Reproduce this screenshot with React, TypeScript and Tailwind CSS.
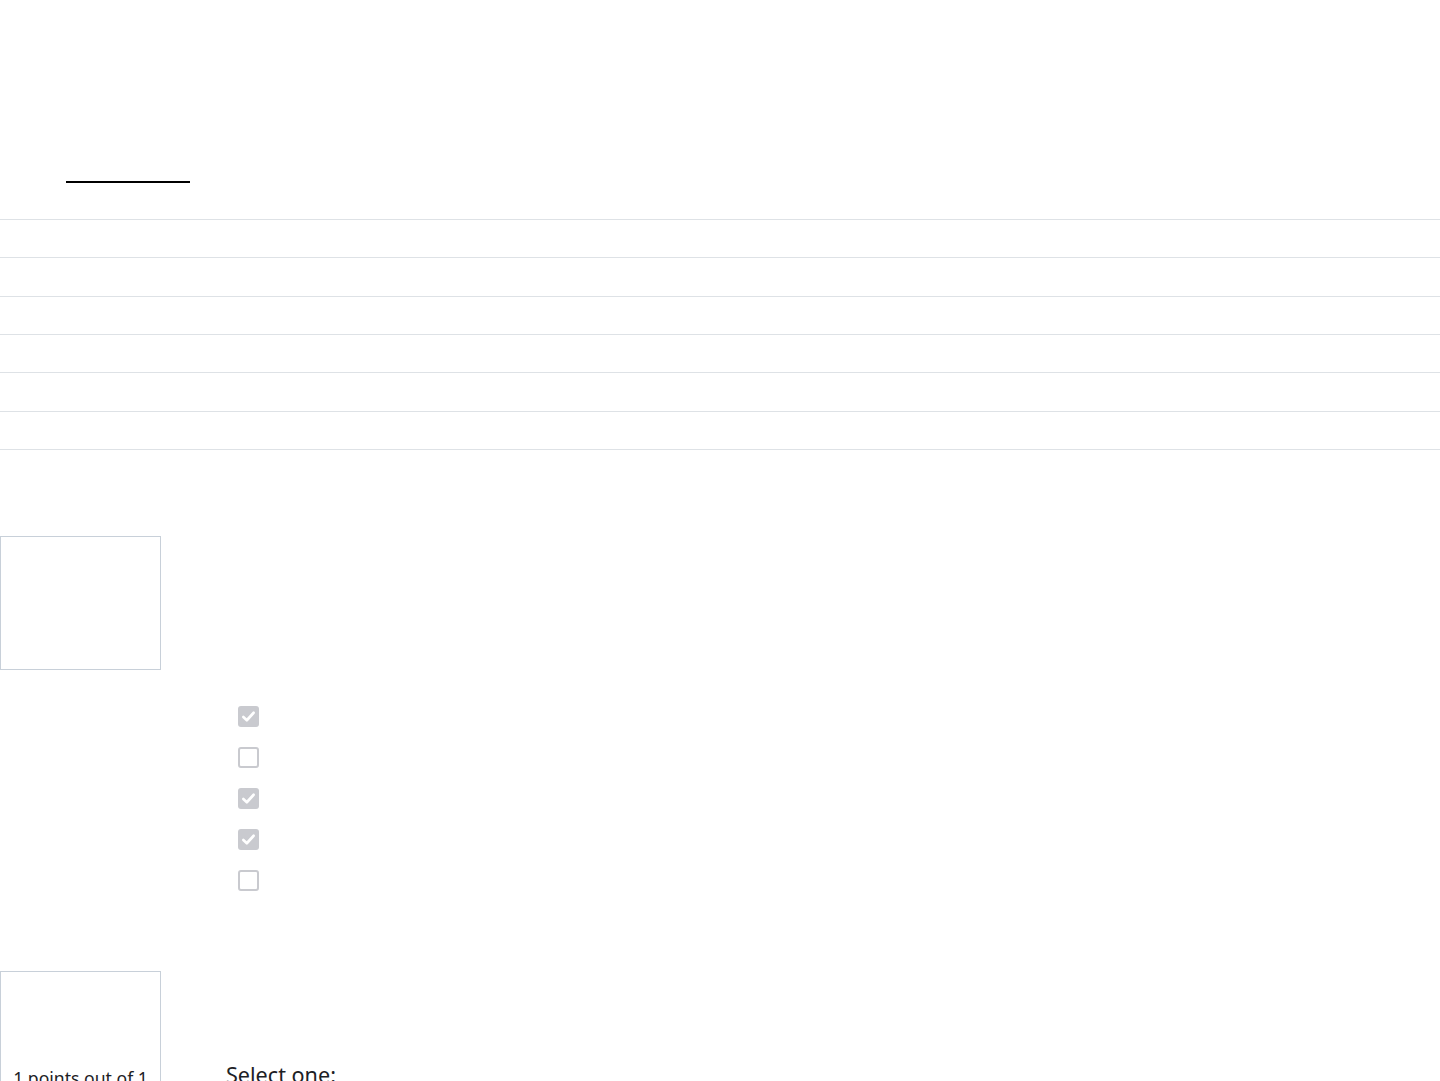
import React from "react";

const rows = [0, 1, 2, 3, 4, 5];
const checks = [true, false, true, true, false];

function Box({ checked }: { checked: boolean }) {
  return checked ? (
    <div className="w-[21px] h-[21px] rounded-[3px] bg-[#c9cacf] flex items-center justify-center">
      <svg width="15" height="15" viewBox="0 0 16 16" fill="none">
        <path d="M2.5 8.5 L6.2 12 L13.5 4" stroke="#ffffff" strokeWidth="2.8" strokeLinecap="round" strokeLinejoin="round" />
      </svg>
    </div>
  ) : (
    <div className="w-[21px] h-[21px] rounded-[3px] border-[2.5px] border-[#c9cacf] bg-white" />
  );
}

export default function App() {
  return (
    <div className="w-full h-[1081px] overflow-hidden bg-white text-[#1d2125]" style={{ fontFamily: '"Noto Sans", "Open Sans", sans-serif' }}>
      <div className="pt-[181px] pl-[66px]">
        <div className="w-[124px] h-[1.5px] bg-black" />
      </div>
      <div className="mt-[36.5px]">
        {rows.map((r) => (
          <div key={r} className="h-[38.35px] border-t border-[#dee2e6]" />
        ))}
        <div className="border-t border-[#dee2e6]" />
      </div>
      <div className="mt-[86px] w-[161px] h-[134px] border border-[#c8d0d9]" />
      <div className="mt-[36px] pl-[238px] flex flex-col gap-[20px]">
        {checks.map((c, i) => (
          <Box key={i} checked={c} />
        ))}
      </div>
      <div className="mt-[80px] flex">
        <div className="w-[161px] h-[200px] shrink-0 border border-[#c8d0d9] pt-[93px] text-center text-[17.6px] leading-[1.5]">
          1 points out of 1
        </div>
        <div className="pl-[65px] pt-[88px] text-[21.6px] leading-[1.5]">Select one:</div>
      </div>
    </div>
  );
}
